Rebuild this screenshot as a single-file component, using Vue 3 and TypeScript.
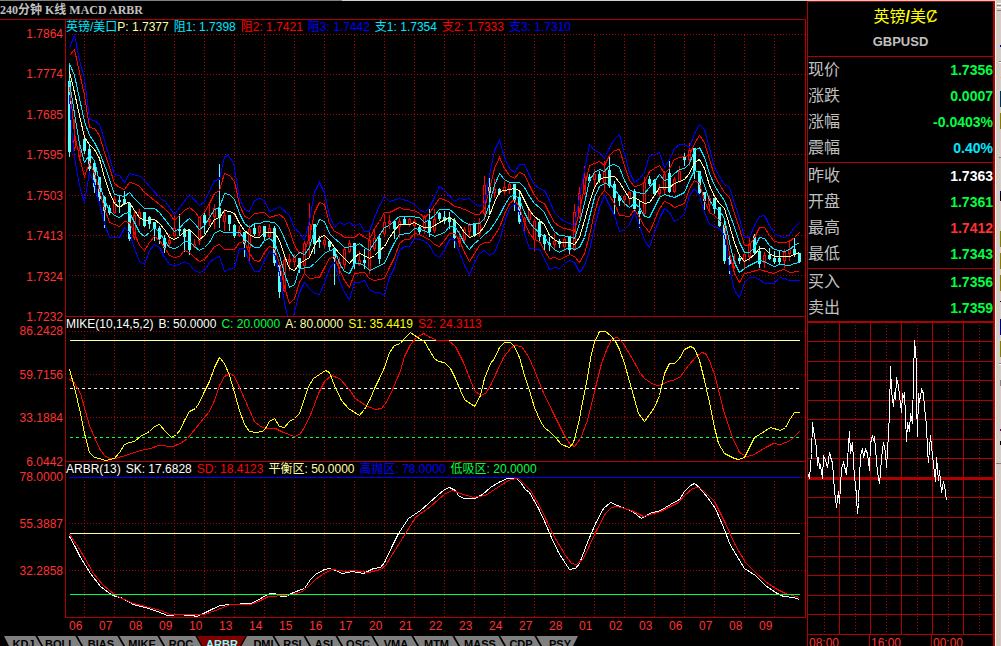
<script setup lang="ts">
import { ref } from 'vue'

interface Series { text: string; tone: string }
interface Curve { tone: string; points: string }
interface Quote { label: string; value: string; tone: string }
type Candle = [x: number, high: number, low: number, top: number, bottom: number]

const gridColumns: number[] = Array.from({ length: 24 }, (_, i) => 84 + i * 30)

const priceTicks = ['1.7864', '1.7774', '1.7685', '1.7595', '1.7503', '1.7413', '1.7324', '1.7232']
const priceRows = [34, 74, 114, 154, 195, 235, 275]
const mikeTicks = ['86.2428', '59.7156', '33.1884', '6.0442']
const mikeRows = [331, 374, 417]
const arbrTicks = ['78.0000', '55.3887', '32.2858', '']
const arbrRows = [477, 523, 570]

const priceSeries: Series[] = [
  { text: 'P: 1.7377', tone: 'cream' },
  { text: '阻1: 1.7398', tone: 'cyan' },
  { text: '阻2: 1.7421', tone: 'red' },
  { text: '阻3: 1.7442', tone: 'blue' },
  { text: '支1: 1.7354', tone: 'cyan' },
  { text: '支2: 1.7333', tone: 'red' },
  { text: '支3: 1.7310', tone: 'blue' },
]
const mikeSeries: Series[] = [
  { text: 'MIKE(10,14,5,2)', tone: 'white' },
  { text: 'B: 50.0000', tone: 'white' },
  { text: 'C: 20.0000', tone: 'green' },
  { text: 'A: 80.0000', tone: 'cream' },
  { text: 'S1: 35.4419', tone: 'yellow' },
  { text: 'S2: 24.3113', tone: 'red' },
]
const arbrSeries: Series[] = [
  { text: 'ARBR(13)', tone: 'white' },
  { text: 'SK: 17.6828', tone: 'white' },
  { text: 'SD: 18.4123', tone: 'red' },
  { text: '平衡区: 50.0000', tone: 'cream' },
  { text: '高抛区: 78.0000', tone: 'blue' },
  { text: '低吸区: 20.0000', tone: 'green' },
]

const priceCurves: Curve[] = [
  {
    tone: 'blue',
    points: '69,48 74,34 79,60 84,78 89,119 94,120 99,124 104,140 109,157 114,174 119,175 124,182 129,173 140,176 144,180 150,187 160,198 165,201 174,214 189,194 199,205 204,201 214,180 219,179 224,156 228,155 233,163 239,197 244,209 249,211 254,200 259,198 264,200 269,211 274,209 279,206 289,215 294,228 299,232 304,240 309,220 314,192 319,182 324,192 329,215 334,227 339,222 344,224 349,222 354,226 359,223 364,231 369,231 374,217 379,205 384,196 389,201 399,198 409,201 414,204 419,209 424,212 429,207 434,197 439,186 444,190 454,201 459,198 464,199 469,198 474,203 479,206 484,203 488,180 494,150 499,140 504,157 509,168 514,172 519,164 524,164 529,175 534,184 539,188 544,190 549,200 554,212 559,217 564,221 569,223 574,225 579,197 584,170 589,144 594,150 599,152 604,158 609,147 614,139 619,134 624,153 629,172 634,182 639,178 644,172 649,155 654,154 659,152 664,167 669,159 674,148 679,144 684,144 689,147 694,133 699,124 704,129 709,148 714,167 719,176 724,184 729,187 734,203 739,218 744,237 749,237 754,225 759,216 764,215 769,225 774,233 779,236 784,237 789,234 794,227 799,222',
  },
  {
    tone: 'red',
    points: '69,55 74,49 84,95 89,127 94,128 99,135 104,152 109,167 114,183 119,187 124,189 129,182 134,183 139,186 144,192 154,200 164,208 169,213 174,220 184,210 189,207 194,211 199,217 204,212 209,203 214,193 219,190 224,173 229,175 234,181 239,204 244,216 249,218 254,213 264,212 269,217 279,214 284,218 289,230 294,245 299,253 304,250 309,237 314,212 319,202 324,204 329,223 334,231 339,233 344,237 354,237 359,233 364,237 369,239 374,228 379,221 384,212 389,212 399,207 404,209 414,210 419,213 424,217 429,213 434,205 439,198 444,199 449,202 454,206 459,207 464,209 469,211 474,214 479,214 484,208 488,193 494,168 499,157 504,168 509,175 514,178 519,172 524,174 529,185 534,195 539,201 544,203 549,213 554,222 559,226 564,228 569,229 574,231 579,210 584,187 589,165 599,161 604,165 609,155 614,150 619,149 624,165 629,180 634,186 639,185 644,182 649,171 654,168 659,165 664,173 669,168 674,159 679,157 689,155 694,143 699,135 704,142 709,159 714,175 719,184 724,192 729,197 734,213 739,228 744,245 749,245 754,237 759,227 764,227 769,235 774,241 779,242 784,242 789,241 794,237 799,232',
  },
  {
    tone: 'cyan',
    points: '69,63 74,75 84,121 89,135 94,142 99,152 106,170 114,194 124,196 129,192 134,198 139,203 144,208 154,208 159,212 169,225 174,231 179,228 184,222 189,218 194,223 199,229 204,225 214,209 219,207 224,193 229,194 234,199 239,213 244,223 249,227 254,223 259,223 264,221 274,222 279,227 284,238 289,250 294,257 299,252 304,254 309,247 314,230 319,219 324,221 329,233 334,238 339,242 344,247 354,246 359,243 364,247 369,250 374,242 379,235 384,227 389,225 394,220 399,216 409,216 419,217 424,222 429,219 434,215 439,209 449,209 454,213 459,218 464,222 469,224 479,223 484,218 489,203 494,185 499,173 504,179 509,182 519,182 524,187 529,196 534,203 539,207 544,212 549,223 554,231 559,235 569,236 574,238 579,223 584,203 589,180 594,172 599,169 604,171 609,165 614,164 619,167 624,180 629,189 634,192 644,193 649,187 654,181 659,174 664,180 669,178 674,173 679,169 684,168 689,163 694,150 699,147 704,157 709,173 714,185 719,193 724,200 729,213 734,227 739,242 744,252 749,252 754,247 759,237 764,238 769,245 774,249 784,251 789,249 794,245 799,242',
  },
  {
    tone: 'cyan',
    points: '69,82 74,113 79,143 84,162 89,154 94,160 99,182 104,200 109,210 114,215 119,217 124,213 129,212 134,222 139,232 144,236 149,232 154,227 159,232 164,240 169,247 174,248 179,246 184,241 189,241 194,246 199,250 204,247 209,242 214,233 219,230 224,232 239,232 244,238 249,243 254,247 259,247 264,240 269,238 274,242 279,255 284,273 289,287 294,284 299,268 309,267 314,263 319,258 324,253 329,250 334,249 339,263 344,271 349,273 354,263 359,263 364,265 369,270 374,268 379,265 384,263 389,252 394,242 399,234 409,233 414,228 424,230 429,233 434,236 439,234 444,232 449,226 454,226 459,233 464,243 469,249 474,243 479,239 484,234 489,230 494,223 499,215 504,205 509,197 514,194 519,199 524,212 529,222 534,228 539,232 544,237 549,244 554,249 559,252 564,249 569,247 574,249 579,247 584,237 589,217 594,197 599,186 604,183 609,184 614,188 619,196 624,203 629,207 634,203 639,207 644,216 649,217 654,207 659,197 664,194 674,197 684,192 689,180 694,170 699,172 704,185 709,200 714,207 719,210 724,218 729,242 734,262 739,272 744,268 749,265 759,260 764,261 769,264 774,266 779,264 789,265 794,263 799,262',
  },
  {
    tone: 'red',
    points: '69,87 72,113 74,133 79,157 84,176 89,162 94,173 99,190 104,208 109,222 114,224 119,226 124,221 129,222 134,233 139,245 144,250 149,242 154,236 159,240 164,247 169,255 174,257 179,256 184,250 189,252 194,257 199,261 204,259 209,253 214,246 219,244 224,249 234,249 239,242 244,241 249,253 254,260 259,261 264,252 269,246 274,248 279,263 284,287 289,303 294,298 299,282 304,273 309,278 319,277 324,267 329,258 334,256 338,267 344,280 349,287 354,273 364,272 369,278 374,280 379,279 384,278 389,267 394,257 399,243 404,239 409,239 414,233 419,234 424,237 429,239 434,244 439,246 444,240 449,233 454,233 459,240 464,252 469,261 474,253 479,245 484,242 489,242 494,235 499,227 504,214 509,203 514,199 519,207 524,222 529,233 534,239 539,241 544,250 549,258 554,257 559,259 564,257 569,254 574,256 579,262 584,253 589,235 594,212 599,196 604,190 609,195 614,203 619,215 629,216 634,209 639,217 644,226 649,232 654,220 659,208 664,201 669,203 674,207 684,203 689,188 694,180 699,183 704,200 709,212 714,215 719,220 724,225 729,253 734,273 739,282 744,273 749,272 759,269 769,272 774,273 779,270 784,269 789,272 799,271',
  },
  {
    tone: 'blue',
    points: '69,95 71,127 74,157 79,185 84,202 89,172 94,183 99,203 104,223 109,237 119,237 124,227 129,232 134,248 139,261 144,264 149,250 154,244 159,247 164,257 169,264 174,265 179,264 184,261 189,264 194,270 199,272 204,270 209,262 214,258 219,256 224,271 229,269 234,267 239,248 244,248 249,262 254,271 259,271 264,260 269,251 274,253 279,273 284,302 287,316 293,316 299,292 304,282 309,288 314,293 319,294 324,282 329,268 334,262 339,280 344,292 349,299 354,282 359,282 364,280 369,289 374,292 379,292 384,295 389,277 394,267 399,250 404,246 409,246 414,238 423,240 429,245 434,254 439,257 444,249 449,239 454,239 459,252 464,265 469,274 474,262 479,253 484,250 489,255 494,252 499,240 504,222 509,208 514,203 519,212 524,233 529,248 539,249 544,258 549,269 554,267 559,268 564,263 569,260 574,262 579,272 584,265 589,250 594,227 599,207 604,195 609,205 614,215 619,231 624,229 629,224 634,212 639,225 644,240 649,247 654,232 659,218 664,208 669,212 674,221 679,218 684,213 689,195 694,188 699,195 704,212 709,224 714,226 719,228 724,235 729,268 734,290 739,297 744,282 749,277 754,277 759,279 764,283 774,283 779,277 784,278 789,280 799,280',
  },
  {
    tone: 'cream',
    points: '69,71 74,92 79,115 84,137 89,144 94,149 99,158 104,177 109,192 114,203 119,207 124,203 129,202 134,210 139,217 144,220 154,219 159,223 164,229 169,237 174,239 179,236 184,231 189,229 194,234 199,239 204,235 214,219 219,217 224,210 229,211 234,213 239,223 244,230 249,234 254,237 259,237 264,232 274,232 279,240 284,255 289,268 294,270 299,263 304,260 309,257 314,245 319,237 324,235 329,240 334,247 339,253 344,258 349,263 354,257 359,253 364,255 369,258 374,255 379,250 384,246 389,237 394,230 399,224 409,224 414,222 419,225 424,227 431,227 439,222 449,217 454,220 459,225 464,232 469,237 474,235 479,232 484,226 489,215 494,202 499,191 504,190 514,188 519,190 524,200 529,210 534,216 539,220 544,224 549,235 554,239 559,242 569,242 574,244 579,237 584,220 589,202 594,187 599,179 604,177 614,176 619,182 624,190 629,198 634,197 639,200 644,203 649,202 654,195 659,187 669,187 674,183 684,179 689,173 694,162 699,159 704,168 709,185 714,196 719,203 724,208 729,225 734,242 739,255 744,261 749,258 754,254 759,248 764,248 769,253 774,256 789,256 794,254 799,252',
  },
]

const falling: Candle[] = [
  [69, 63, 156, 81, 151], [84, 135, 153, 139, 150], [89, 143, 174, 149, 168], [94, 160, 192, 163, 186],
  [99, 176, 201, 177, 198], [104, 195, 227, 197, 210], [109, 204, 214, 208, 212], [119, 194, 212, 200, 201],
  [124, 190, 204, 199, 203], [129, 201, 240, 203, 238], [144, 211, 226, 212, 225], [149, 215, 228, 217, 223],
  [154, 221, 240, 222, 228], [159, 225, 243, 228, 238], [164, 234, 252, 238, 247], [179, 213, 235, 229, 230],
  [184, 227, 251, 229, 236], [189, 228, 254, 230, 249], [204, 211, 233, 215, 222], [219, 163, 227, 208, 217],
  [229, 214, 230, 215, 223], [234, 223, 237, 225, 235], [244, 231, 256, 232, 243], [254, 223, 235, 228, 233],
  [264, 226, 240, 226, 236], [274, 225, 265, 228, 262], [279, 262, 297, 265, 291], [299, 257, 272, 258, 267],
  [314, 223, 253, 224, 243], [319, 235, 247, 240, 241], [329, 240, 249, 241, 246], [334, 246, 284, 248, 258],
  [354, 243, 268, 243, 263], [364, 248, 268, 260, 262], [379, 233, 263, 238, 258], [394, 220, 238, 221, 228],
  [404, 215, 224, 219, 224], [419, 225, 234, 227, 231], [429, 208, 236, 221, 231], [439, 211, 220, 213, 218],
  [444, 210, 223, 217, 220], [449, 211, 228, 217, 221], [454, 217, 247, 220, 237], [474, 222, 236, 223, 235],
  [489, 177, 213, 187, 192], [499, 187, 194, 189, 192], [514, 184, 210, 184, 199], [519, 190, 223, 197, 221],
  [539, 218, 240, 222, 236], [544, 233, 250, 235, 243], [549, 236, 250, 243, 244], [559, 238, 247, 241, 243],
  [569, 236, 253, 237, 249], [589, 173, 182, 177, 180], [599, 170, 182, 174, 179], [609, 155, 187, 170, 185],
  [614, 180, 213, 184, 197], [619, 194, 205, 196, 200], [634, 188, 212, 191, 208], [639, 200, 227, 211, 213],
  [649, 175, 185, 179, 183], [654, 178, 195, 180, 193], [669, 160, 192, 173, 191], [684, 152, 165, 157, 159],
  [694, 148, 178, 148, 170], [699, 170, 193, 171, 192], [704, 192, 209, 192, 200], [714, 197, 213, 198, 208],
  [719, 207, 226, 207, 225], [724, 217, 263, 225, 260], [729, 255, 273, 258, 263], [739, 255, 263, 258, 260],
  [754, 233, 253, 236, 252], [759, 245, 267, 251, 263], [769, 247, 259, 255, 258], [774, 250, 263, 258, 261],
  [779, 249, 263, 258, 261], [794, 237, 256, 249, 254], [799, 253, 262, 253, 261],
]
const rising: Candle[] = [
  [74, 118, 150, 140, 147], [79, 145, 160, 150, 156], [114, 195, 213, 199, 212], [134, 209, 239, 215, 237],
  [139, 208, 225, 212, 217], [169, 233, 247, 240, 243], [174, 215, 238, 228, 235], [194, 238, 247, 244, 246],
  [199, 216, 244, 217, 240], [209, 201, 225, 219, 221], [214, 203, 228, 208, 216], [224, 208, 230, 215, 221],
  [239, 225, 236, 230, 235], [249, 224, 260, 229, 247], [259, 224, 235, 226, 232], [269, 223, 238, 228, 236],
  [284, 256, 291, 260, 290], [289, 253, 270, 259, 261], [294, 253, 266, 257, 261], [304, 237, 273, 243, 265],
  [309, 202, 257, 224, 238], [324, 235, 247, 240, 244], [339, 256, 273, 262, 267], [344, 247, 268, 249, 264],
  [349, 239, 252, 243, 251], [359, 250, 265, 260, 264], [369, 230, 273, 240, 269], [374, 228, 250, 238, 248],
  [384, 213, 236, 222, 233], [389, 214, 228, 221, 223], [399, 217, 237, 221, 226], [409, 217, 226, 219, 224],
  [414, 218, 238, 221, 225], [424, 214, 233, 216, 228], [434, 208, 232, 219, 230], [459, 230, 246, 238, 242],
  [464, 226, 243, 229, 239], [469, 222, 237, 225, 231], [479, 217, 236, 222, 233], [484, 175, 220, 185, 213],
  [494, 178, 197, 189, 192], [504, 180, 193, 187, 191], [509, 181, 193, 184, 188], [524, 216, 230, 218, 221],
  [529, 207, 223, 210, 219], [534, 218, 250, 221, 239], [554, 232, 249, 241, 244], [564, 236, 250, 239, 246],
  [574, 203, 250, 212, 248], [579, 186, 218, 193, 216], [584, 165, 194, 177, 193], [594, 168, 188, 174, 179],
  [604, 160, 190, 171, 182], [624, 194, 205, 196, 199], [629, 190, 204, 192, 198], [644, 176, 216, 182, 213],
  [659, 183, 196, 189, 193], [664, 170, 194, 174, 189], [674, 176, 192, 179, 191], [679, 165, 182, 171, 181],
  [689, 142, 165, 150, 159], [709, 194, 210, 198, 204], [734, 253, 268, 261, 266], [744, 252, 268, 254, 261],
  [749, 237, 260, 244, 256], [764, 251, 267, 255, 262], [784, 248, 267, 252, 260], [789, 239, 260, 249, 253],
]

const mikeCurves: Curve[] = [
  {
    tone: 'red',
    points: '69,379 73,381 80,393 89,425 94,437 100,450 105,456 110,458 115,458 128,454 140,450 150,448 158,445 172,446 180,443 187,438 199,423 209,411 214,400 219,385 224,376 230,373 234,376 239,387 247,405 254,421 260,426 265,428 275,428 283,432 294,436 299,434 304,427 311,412 318,393 324,381 331,375 339,378 348,388 355,398 365,405 375,409 381,408 387,400 393,387 400,370 404,356 410,344 416,337 423,333 430,337 437,340 448,340 455,346 463,362 474,390 480,395 485,393 490,385 496,372 503,357 510,348 514,345 521,346 528,356 534,370 542,390 553,413 565,437 570,444 574,446 580,438 587,420 595,387 601,363 607,347 612,338 617,337 622,342 630,355 640,373 644,378 653,384 658,385 668,381 675,379 680,376 688,365 695,357 701,352 705,353 709,360 715,377 723,410 732,437 739,452 746,456 752,455 765,447 773,443 780,444 790,440 799,431',
  },
  {
    tone: 'yellow',
    points: '69,369 74,387 80,413 84,433 89,452 94,457 99,458 105,460 114,458 119,452 124,444 129,442 134,441 140,436 149,431 154,426 159,424 165,431 171,437 176,434 180,429 184,420 189,411 195,408 199,402 204,391 209,381 214,367 219,357 224,363 229,375 234,392 239,410 244,424 249,431 256,432 262,431 265,428 269,421 274,418 279,426 284,427 289,421 294,418 299,413 304,398 308,386 313,378 319,374 325,370 329,372 334,385 341,400 348,408 359,415 364,409 370,398 374,388 379,378 384,367 389,352 394,345 400,343 404,338 410,332 417,337 424,341 429,350 434,358 438,361 444,362 450,368 455,378 460,390 464,399 474,406 480,395 484,378 490,363 494,358 499,347 504,342 510,342 514,346 519,357 524,375 529,390 534,407 540,421 544,427 550,432 555,437 561,444 569,447 573,442 578,423 583,397 587,377 591,353 594,342 599,331 605,331 610,335 615,341 619,349 624,363 631,388 638,413 644,421 649,414 654,407 659,395 664,373 669,363 674,363 679,358 684,349 690,346 694,348 699,360 704,380 709,402 714,427 718,443 724,453 734,458 738,459 744,457 749,447 754,437 759,434 770,427 780,430 785,427 790,418 794,412 799,412',
  },
]

const arbrCurves: Curve[] = [
  {
    tone: 'white',
    points: '69,536 74,545 80,557 90,573 100,586 112,595 120,597 133,604 145,607 157,611 167,615 172,615 175,614 182,614 185,615 192,615 196,616 203,613 213,608 220,605 230,604 250,603 257,600 265,595 270,593 275,593 280,596 285,596 293,592 304,588 310,579 315,574 324,569 329,568 335,570 342,573 352,571 363,573 373,568 380,567 384,562 392,545 398,533 408,518 420,510 428,503 437,495 444,489 449,487 455,490 458,495 463,498 474,498 482,494 490,487 498,482 507,478 516,478 520,482 525,489 529,492 538,508 545,523 550,535 558,552 565,563 569,569 575,568 579,563 587,542 595,523 603,508 610,502 617,505 632,511 641,518 649,513 660,510 670,504 679,499 684,491 690,485 694,483 699,487 707,497 715,508 723,527 730,545 744,568 755,575 765,585 775,592 783,596 793,597 799,599',
  },
  {
    tone: 'red',
    points: '69,534 76,544 84,557 93,573 102,584 115,595 133,603 145,606 160,610 170,614 204,614 215,610 230,604 250,604 258,601 268,596 285,595 300,592 306,588 315,579 325,572 332,569 345,571 352,570 368,572 380,569 385,565 395,549 405,533 415,517 430,506 445,493 452,490 460,493 473,497 485,495 500,485 510,479 518,478 530,490 540,507 552,533 565,555 571,563 576,564 583,558 595,532 605,513 611,507 617,506 631,510 643,516 650,514 660,511 678,502 684,495 692,488 698,487 704,491 714,501 725,523 735,545 745,562 755,572 765,581 775,588 785,593 799,597',
  },
]

const days = ['06', '07', '08', '09', '10', '13', '14', '15', '16', '17', '20', '21', '22', '23', '24', '27', '28', '01', '02', '03', '06', '07', '08', '09']

const tabs = [
  { name: 'KDJ', width: 33 }, { name: 'BOLL', width: 40 }, { name: 'BIAS', width: 42 },
  { name: 'MIKE', width: 40 }, { name: 'ROC', width: 38 }, { name: 'ARBR', width: 50 },
  { name: 'DMI', width: 27 }, { name: 'RSI', width: 31 }, { name: 'ASI', width: 32 },
  { name: 'OSC', width: 36 }, { name: 'VMA', width: 40 }, { name: 'MTM', width: 41 },
  { name: 'MASS', width: 46 }, { name: 'CDP', width: 36 }, { name: 'PSY', width: 42 },
]
const active = ref('ARBR')

const quoteGroups: Quote[][] = [
  [
    { label: '现价', value: '1.7356', tone: 'green' },
    { label: '涨跌', value: '0.0007', tone: 'green' },
    { label: '涨幅', value: '-0.0403%', tone: 'green' },
    { label: '震幅', value: '0.40%', tone: 'cyan' },
  ],
  [
    { label: '昨收', value: '1.7363', tone: 'white' },
    { label: '开盘', value: '1.7361', tone: 'green' },
    { label: '最高', value: '1.7412', tone: 'coral' },
    { label: '最低', value: '1.7343', tone: 'green' },
  ],
  [
    { label: '买入', value: '1.7356', tone: 'green' },
    { label: '卖出', value: '1.7359', tone: 'green' },
  ],
]

const tickRows = [341, 361, 380, 400, 419, 439, 458, 497, 517, 536, 556, 575, 595, 614, 634]
const tickSolid = [839, 870, 901, 932, 963]
const tickDotted = [824, 855, 886, 917, 948, 979]
const tickLine = '808,474 809,478 811,453 812,422 813,430 814,435 816,447 817,465 818,457 819,467 820,465 822,478 823,455 825,460 827,467 829,452 831,460 832,462 834,490 836,507 838,491 839,503 841,468 843,462 845,470 846,474 848,445 849,431 850,453 852,442 854,478 855,482 857,513 858,502 860,455 862,448 863,457 865,449 867,453 869,470 870,443 872,435 873,440 874,436 876,460 877,472 879,483 880,473 881,457 883,442 885,452 886,467 888,433 889,413 890,366 891,390 893,406 894,392 895,399 896,377 898,385 899,395 901,412 902,393 903,397 904,392 906,441 907,422 909,431 910,413 912,423 913,377 914,340 916,363 916,400 917,436 918,393 919,402 921,389 923,393 924,407 926,425 927,450 928,462 930,435 932,455 935,481 936,457 938,480 939,470 941,492 943,481 944,485 946,500'
const hours = ['08:00', '16:00', '00:00']
</script>

<template>
  <div class="terminal">
    <div class="frame-edge" aria-hidden="true"><i></i><b></b></div>
    <div class="workspace">
      <main class="charts">
        <h1 class="title">240分钟 K线 MACD ARBR</h1>

        <section class="panel price">
          <div class="legend">
            <span class="cyan">英镑/美口</span>
            <span v-for="(s, i) in priceSeries" :key="s.text" :class="[s.tone, { spaced: i > 0 }]">{{ s.text }}</span>
          </div>
          <div class="axis"><span v-for="t in priceTicks" :key="t">{{ t }}</span></div>
          <svg class="plot" viewBox="66 34 739 282" preserveAspectRatio="none" role="img" aria-label="K线">
            <g transform="translate(.5 .5)">
              <path v-for="y in priceRows" :key="y" class="dots" :d="`M68 ${y}H804`" />
              <path v-for="x in gridColumns" :key="x" class="dots" :d="`M${x} 34V316`" />
              <g class="rise">
                <template v-for="c in rising" :key="c[0]">
                  <path :d="`M${c[0]} ${c[1]}V${c[3]}M${c[0]} ${c[4]}V${c[2]}`" />
                  <rect :x="c[0] - 1" :y="c[3]" width="2" :height="c[4] - c[3]" />
                </template>
              </g>
              <g class="fall">
                <template v-for="c in falling" :key="c[0]">
                  <path :d="`M${c[0]} ${c[1]}V${c[2]}`" />
                  <rect :x="c[0] - 1" :y="c[3]" width="2" :height="c[4] - c[3]" />
                </template>
              </g>
              <polyline v-for="(c, i) in priceCurves" :key="i" class="curve" :class="c.tone" :points="c.points" />
            </g>
          </svg>
        </section>

        <section class="panel mike">
          <div class="legend">
            <span v-for="(s, i) in mikeSeries" :key="s.text" :class="[s.tone, { spaced: i > 0 }]">{{ s.text }}</span>
          </div>
          <div class="axis"><span v-for="t in mikeTicks" :key="t">{{ t }}</span></div>
          <svg class="plot" viewBox="66 331 739 130" preserveAspectRatio="none" role="img" aria-label="MIKE">
            <g transform="translate(.5 .5)">
              <path v-for="y in mikeRows" :key="y" class="dots" :d="`M68 ${y}H804`" />
              <path v-for="x in gridColumns" :key="x" class="dots" :d="`M${x} 334V461`" />
              <path class="curve cream" d="M69 340H799" />
              <path class="curve white dashed" d="M69 388H799" />
              <path class="curve green dashed" d="M69 437H799" />
              <polyline v-for="c in mikeCurves" :key="c.tone" class="curve" :class="c.tone" :points="c.points" />
            </g>
          </svg>
        </section>

        <section class="panel arbr">
          <div class="legend">
            <span v-for="(s, i) in arbrSeries" :key="s.text" :class="[s.tone, { spaced: i > 0 }]">{{ s.text }}</span>
          </div>
          <div class="axis"><span v-for="t in arbrTicks" :key="t">{{ t }}</span></div>
          <svg class="plot" viewBox="66 477 739 140" preserveAspectRatio="none" role="img" aria-label="ARBR">
            <g transform="translate(.5 .5)">
              <path v-for="y in arbrRows" :key="y" class="dots" :d="`M68 ${y}H804`" />
              <path v-for="x in gridColumns" :key="x" class="dots" :d="`M${x} 480V617`" />
              <path class="curve blue" d="M68 477H799" />
              <path class="curve cream" d="M69 533H799" />
              <polyline v-for="c in arbrCurves" :key="c.tone" class="curve" :class="c.tone" :points="c.points" />
              <path class="curve green" d="M69 594H799" />
            </g>
          </svg>
        </section>

        <div class="days"><span v-for="(d, i) in days" :key="i">{{ d }}</span></div>

        <nav class="tabs">
          <div class="tab-list" role="tablist">
            <button
              v-for="t in tabs"
              :key="t.name"
              type="button"
              role="tab"
              class="tab"
              :class="{ active: active === t.name }"
              :aria-selected="active === t.name"
              :style="{ width: t.width + 'px' }"
              @click="active = t.name"
            >{{ t.name }}</button>
          </div>
        </nav>
      </main>

      <aside class="side">
        <header class="symbol">
          <h2>英镑<b>/</b>美Ȼ</h2>
          <p>GBPUSD</p>
        </header>
        <dl v-for="(group, g) in quoteGroups" :key="g" class="quotes">
          <div v-for="q in group" :key="q.label" class="quote">
            <dt>{{ q.label }}</dt>
            <dd :class="q.tone">{{ q.value }}</dd>
          </div>
        </dl>
        <svg class="ticks" viewBox="808 323 185 312" preserveAspectRatio="none" role="img" aria-label="分时">
          <g transform="translate(.5 .5)">
            <path v-for="x in tickDotted" :key="x" class="dots" :d="`M${x} 324V634`" />
            <path v-for="y in tickRows" :key="y" class="rule" :d="`M807 ${y}H993`" />
            <path v-for="x in tickSolid" :key="x" class="rule" :d="`M${x} 322V634`" />
          </g>
          <rect class="base" x="808" y="477" width="185" height="3" />
          <polyline class="curve white" transform="translate(.5 .5)" :points="tickLine" />
        </svg>
        <div class="hours"><span v-for="h in hours" :key="h">{{ h }}</span></div>
      </aside>

      <div class="dock" aria-hidden="true">
        <svg viewBox="996 1 5 645" preserveAspectRatio="none">
          <path fill="#fff" d="M997 3h4v1h-4zM997 7h4v1h-4zM999 62h2v1h-2zM999 364h2v1h-2z" />
          <path fill="#808080" d="M997 5h4v1h-4zM997 10h4v1h-4zM999 61h2v1h-2zM999 157h2v1h-2zM999 363h2v1h-2zM1000 380h1v6h-1zM996 463h5v1h-5z" />
          <path fill="#000080" d="M1000 45h1v2h-1zM1000 191h1v2h-1zM1000 319h1v16h-1z" />
          <path fill="#003060" d="M1000 91h1v16h-1z" />
          <path fill="#e8c840" d="M1000 77h1v1h-1z" />
          <path fill="#808000" d="M1000 113h1v16h-1zM1000 231h1v16h-1zM1000 253h1v16h-1zM1000 275h1v16h-1zM1000 341h1v16h-1z" />
          <path fill="#000" d="M1000 193h1v8h-1zM1000 301h1v1h-1zM1000 441h1v4h-1z" />
          <path fill="#600060" d="M1000 429h1v2h-1z" />
        </svg>
      </div>
    </div>
  </div>
</template>

<style>
body {
  margin: 0;
  background: #000;
}
</style>

<style scoped>
.terminal {
  display: flex;
  flex-direction: column;
  height: 100vh;
  overflow: hidden;
  background: #000;
  color: #fff;
  font-family: "Liberation Sans", "Noto Sans CJK SC", sans-serif;
  font-size: 12px;
}

.frame-edge {
  display: flex;
  flex: 0 0 1px;
}
.frame-edge i { flex: 342 1 0; background: #808080; }
.frame-edge b { flex: 659 1 0; background: #d4d0c8; }

.workspace {
  display: grid;
  flex: 1 1 0;
  grid-template-columns: minmax(0, 1fr) 188px 6px;
  min-height: 0;
}

.charts {
  display: flex;
  flex-direction: column;
  min-height: 0;
  padding-right: 1px;
}

.title {
  flex: 0 0 18px;
  margin: 0;
  border-bottom: 1px solid #b00000;
  color: #c0c0c0;
  font: bold 12px/18px "Liberation Serif", "Noto Sans CJK SC", serif;
  white-space: nowrap;
}

.panel {
  display: grid;
  grid-template-columns: 65px minmax(0, 1fr);
  min-height: 0;
}
.price { flex: 297 1 0; grid-template-rows: 14px minmax(0, 1fr); }
.mike { flex: 145 1 0; grid-template-rows: 14px minmax(0, 1fr); }
.arbr { flex: 156 1 0; grid-template-rows: 15px minmax(0, 1fr); }

.legend {
  display: flex;
  grid-column: 2;
  min-width: 0;
  border-right: 1px solid #b00000;
  border-left: 1px solid #b00000;
  line-height: 14px;
  white-space: nowrap;
}
.legend .spaced { margin-left: 5px; }

.axis {
  display: flex;
  flex-direction: column;
  grid-column: 1;
  justify-content: space-between;
  margin: -7px 0;
  padding-right: 2px;
  color: #ff3232;
  line-height: 14px;
  text-align: right;
}
.axis span { height: 14px; }

.plot {
  display: block;
  box-sizing: border-box;
  width: 100%;
  height: 100%;
  min-height: 0;
  border: solid #b00000;
  border-width: 0 1px 1px;
}

svg {
  fill: none;
  shape-rendering: crispEdges;
}
.dots { stroke: #b00000; stroke-dasharray: 1 2; }
.rule { stroke: #b00000; }
.base { fill: #b00000; }
.curve { stroke: currentColor; }
.dashed { stroke-dasharray: 3 3; }
.rise { stroke: #f00; fill: #000; }
.fall { stroke: #5ff; fill: #5ff; }

.cream { color: #ffffa0; }
.cyan { color: #00e8ff; }
.red { color: #f00; }
.coral { color: #ff3232; }
.blue { color: #00f; }
.white { color: #fff; }
.green { color: #00ff40; }
.yellow { color: #ff0; }

.days {
  display: flex;
  flex: 0 0 18px;
  padding-left: 69px;
  color: #ff3232;
  line-height: 16px;
}
.days span { flex: 30 1 0; }
.days::after { flex: 17 1 0; content: ""; }

.tabs {
  flex: 0 0 10px;
  overflow: hidden;
  padding-left: 4px;
}
.tab-list {
  display: inline-flex;
  height: 16px;
  background: #808080;
  clip-path: polygon(0 0, 100% 0, calc(100% - 8px) 100%, 8px 100%);
}
.tab {
  position: relative;
  flex: none;
  height: 16px;
  padding: 0 0 0 6px;
  border: 0;
  background: none;
  color: #000;
  font: bold 11px/14px "Liberation Sans", sans-serif;
  text-align: center;
}
.tab::after {
  position: absolute;
  top: 0;
  right: -5px;
  width: 2px;
  height: 16px;
  background: #000;
  content: "";
  transform: skewX(30deg);
}
.tab:last-child::after { display: none; }
.tab.active {
  padding: 0;
  background: #800000;
  color: #80ffff;
  clip-path: polygon(0 0, 100% 0, calc(100% - 9px) 100%, 9px 100%);
}
.tab.active::after {
  right: 4px;
  transform: skewX(-30deg);
}

.side {
  display: flex;
  flex-direction: column;
  box-sizing: border-box;
  min-height: 0;
  border: solid #b00000;
  border-width: 1px 2px 0 1px;
}
.symbol {
  flex: 0 0 54px;
  border-bottom: 1px solid #b00000;
  color: #c0c0c0;
  text-align: center;
}
.symbol h2 {
  margin: 0;
  padding: 3px 0 0 10px;
  color: #ff0;
  font-size: 16px;
  font-weight: 400;
  line-height: 24px;
}
.symbol p {
  margin: 0;
  font-size: 13px;
  font-weight: 700;
  line-height: 26px;
}

.quotes {
  flex: none;
  margin: 0;
  padding-bottom: 1px;
  border-bottom: 1px solid #b00000;
}
.quotes:last-of-type {
  padding-bottom: 0;
  border-bottom-width: 2px;
}
.quote {
  display: flex;
  justify-content: space-between;
  line-height: 26px;
}
.quote dt {
  color: #c0c0c0;
  font-size: 16px;
}
.quote dd {
  margin: 0;
  font-size: 14px;
  font-weight: 700;
}

.ticks {
  display: block;
  flex: 1 1 0;
  width: 100%;
  min-height: 0;
}
.hours {
  display: flex;
  flex: 0 0 11px;
  overflow: hidden;
  color: #ff3232;
  line-height: 16px;
}
.hours span {
  flex: 1 1 0;
  padding-left: 1px;
  border-left: 1px solid #b00000;
}
.hours span:first-child { border-left-width: 0; }

.dock {
  min-height: 0;
  border-left: 1px solid #fff;
  background: #d4d0c8;
}
.dock svg {
  display: block;
  width: 100%;
  height: 100%;
}
</style>
